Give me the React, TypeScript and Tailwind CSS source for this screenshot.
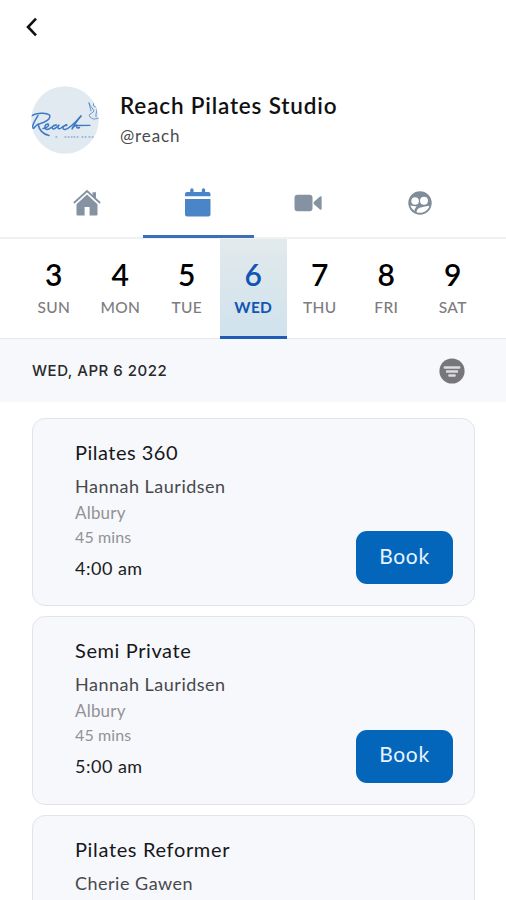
import React from "react";

const days = [
  { n: "3", d: "SUN" },
  { n: "4", d: "MON" },
  { n: "5", d: "TUE" },
  { n: "6", d: "WED", active: true },
  { n: "7", d: "THU" },
  { n: "8", d: "FRI" },
  { n: "9", d: "SAT" },
];

const classes = [
  { title: "Pilates 360", titleTracking: "tracking-[0.5px]", coach: "Hannah Lauridsen", place: "Albury", length: "45 mins", time: "4:00 am" },
  { title: "Semi Private", titleTracking: "tracking-[0.6px]", coach: "Hannah Lauridsen", place: "Albury", length: "45 mins", time: "5:00 am" },
  { title: "Pilates Reformer", titleTracking: "tracking-[0.65px]", coach: "Cherie Gawen" },
];

function Logo() {
  return (
    <svg width="68" height="68" viewBox="0 0 68 68" fill="none" className="block shrink-0">
      <defs>
        <clipPath id="disc">
          <circle cx="34" cy="34" r="33.7" />
        </clipPath>
      </defs>
      <circle cx="34" cy="34" r="33.7" fill="#e1e9f1" />
      <g clipPath="url(#disc)" stroke="#3c78c3" strokeLinecap="round" strokeLinejoin="round">
        <path d="M0 30 C5 27 15 26 18.5 29 C20.5 33 14 36.5 8 38" strokeWidth="1.5" />
        <path d="M7 29.5 C5 33 2 37 1.5 41 C2 45 4 40 7 38 C8 43 11 48 18 49.5" strokeWidth="1.5" />
        <path d="M12 42.5 C16 42 19 39 17 38 C14 38 12 43 16 43.5 C19 43.5 22 39 25.5 39 C21.5 38.5 19.5 43 22.5 43 C25 42.5 27 40 28 39 C26 42 27 44 30 42 C34 38.5 37 38 35.5 39.5 C32 39 30.5 43.5 34 43.5 C38 43 43 38 50 30" strokeWidth="1.4" />
        <path d="M50 30 C46 35 42 40 41 43 C43 40 45.5 38.5 46 39.5 C45.5 41 45.5 43 48.5 41.5" strokeWidth="1.4" />
        <path d="M44 39.5 L59 39.3" strokeWidth="1.3" />
        <path d="M58 17 C59 21 62 22 63 25 C60 29 57 27 59 31 C62 34 65 33 68 32 M63 17 C61 20 64 22 66 20 C67 24 64 28 65 31 M58 17 L60 25" strokeWidth="0.9" opacity="0.8" />
        <path d="M25 51 H28 M34 51 H41 M43 51 H48 M51 51 H55 M58 51 H63" strokeWidth="1.3" strokeDasharray="0.8 2.4" opacity="0.55" />
      </g>
    </svg>
  );
}

function HomeIcon() {
  return (
    <svg width="28" height="28" viewBox="0 0 28 28" className="block">
      <path d="M19.5 3.2 H23 V10.5 L19.5 7.4 Z" fill="#8492a1" />
      <path d="M0.9 14 L14 2 L27.1 14" fill="none" stroke="#8492a1" strokeWidth="1.8" />
      <path d="M3.5 15.2 L14 5.6 L24.5 15.2 V25.4 Q24.5 26.4 23.5 26.4 H16.6 V18 H11.6 V26.4 H4.5 Q3.5 26.4 3.5 25.4 Z" fill="#8492a1" />
    </svg>
  );
}

function CalendarIcon() {
  return (
    <svg width="28" height="30" viewBox="0 0 28 30" fill="#4a86c7" className="block">
      <path d="M1 8.2 V6 Q1 4 3 4 H6.2 V2 A1.7 1.7 0 0 1 9.6 2 V4 H17.8 V2 A1.7 1.7 0 0 1 21.2 2 V4 H24.5 Q26.5 4 26.5 6 V8.2 Z" />
      <path d="M1 11 H26.5 V26.6 Q26.5 28.4 24.7 28.4 H2.8 Q1 28.4 1 26.6 Z" />
    </svg>
  );
}

function VideoIcon() {
  return (
    <svg width="28" height="18" viewBox="0 0 28 18" fill="#8492a1" className="block">
      <rect x="0.5" y="0.8" width="18" height="16.4" rx="3" />
      <path d="M19.7 8 L26 2.5 Q27.6 1.6 27.6 3.3 V14.7 Q27.6 16.4 26 15.5 L19.7 10 Z" />
    </svg>
  );
}

function GroupIcon() {
  return (
    <svg width="24" height="24" viewBox="0 0 24 24" className="block">
      <circle cx="12" cy="12" r="11.7" fill="#7f8c99" />
      <g fill="#fff">
        <circle cx="7.1" cy="10" r="3.8" />
        <circle cx="16" cy="9.8" r="4" />
        <path d="M2.2 14.6 Q5.6 15.1 8.6 15.4 Q6.5 17.4 6.5 19.9 Q3.2 17.8 2.2 14.6 Z" />
        <path d="M8.6 21.2 Q8.5 17.4 12.6 16.4 Q17 15.4 21.5 14.7 Q20 19.9 14.5 21.5 Q11.5 22.1 8.6 21.2 Z" />
      </g>
    </svg>
  );
}

function FilterIcon() {
  return (
    <svg width="26" height="26" viewBox="0 0 26 26" className="block">
      <circle cx="13" cy="13" r="12.6" fill="#77777b" />
      <path d="M5.8 9.4 H20.2 M8 13.6 H18 M10.4 17.6 H15.6" stroke="#dcdce0" strokeWidth="2.5" strokeLinecap="round" />
    </svg>
  );
}

export default function App() {
  return (
    <div className="flex h-[900px] w-[506px] flex-col overflow-hidden bg-white font-[Lato,sans-serif] whitespace-nowrap">
      <header className="flex h-[179px] shrink-0 flex-col px-8">
        <div className="-ml-2 flex h-[54px] items-center">
          <svg width="16" height="22" viewBox="0 0 16 22" fill="none" className="block">
            <path d="M12 2.6 L4 11 L12 19.4" stroke="#111" strokeWidth="2.6" />
          </svg>
        </div>
        <div className="mt-[32px] -ml-px flex items-center">
          <Logo />
          <div className="ml-[21px] flex flex-col">
            <h1 className="text-[22.5px] leading-[30px] font-semibold tracking-[0.82px] text-[#111]">Reach Pilates Studio</h1>
            <p className="mt-[3px] mb-px text-[17px] leading-6 tracking-[0.9px] text-[#4b4b4d]">@reach</p>
          </div>
        </div>
      </header>

      <nav className="grid h-[60px] shrink-0 grid-cols-4 border-b-2 border-[#eff0f1] pr-[31px] pl-8">
        <div className="flex justify-center pt-[10px]"><HomeIcon /></div>
        <div className="-mb-[1px] flex justify-center border-b-3 border-[#3b70b8] pt-[9px]"><CalendarIcon /></div>
        <div className="flex justify-center pt-[15px] pr-[2px]"><VideoIcon /></div>
        <div className="flex justify-center pt-[12px]"><GroupIcon /></div>
      </nav>

      <section className="flex h-[100px] shrink-0 border-b border-[#e6e8eb] pr-5 pl-[20.5px]">
        {days.map((day) => (
          <div
            key={day.d}
            className={
              "flex flex-1 flex-col items-center pt-[17px] " +
              (day.active
                ? "-mb-px border-b-3 border-[#1f5cb5] bg-linear-to-b from-[#e2eaec] to-[#d0e2ed] text-[#0f56b3]"
                : "text-black")
            }
          >
            <span className="text-[30px] leading-9 font-semibold">{day.n}</span>
            <span
              className={
                "mt-[5px] text-[15.5px] leading-5 tracking-[0.3px] " +
                (day.active ? "font-bold" : "font-medium text-[#7c7c7f]")
              }
            >
              {day.d}
            </span>
          </div>
        ))}
      </section>

      <div className="flex h-[63px] shrink-0 items-center justify-between bg-[#f6f8fc] pr-[41px] pl-8">
        <span className="pt-[2px] font-[Inter,sans-serif] text-[15px] font-medium tracking-[0.52px] text-[#29292b]">WED, APR 6 2022</span>
        <FilterIcon />
      </div>

      <main className="flex flex-col gap-[10px] pt-[15.5px] pr-[31px] pl-8">
        {classes.map((c) => (
          <article
            key={c.title}
            className="flex h-[188.5px] shrink-0 items-end justify-between rounded-[13px] border-[1.5px] border-[#e3e4ea] bg-[#f6f8fc] pr-[21px] pl-[42px]"
          >
            <div className="flex h-full flex-col pt-[19px]">
              <h2 className={"text-[20px] leading-7 text-[#171719] " + c.titleTracking}>{c.title}</h2>
              <p className="mt-[8px] text-[18px] leading-6 tracking-[0.5px] text-[#48484b]">{c.coach}</p>
              {c.time && (
                <>
                  <p className="mt-[3px] text-[17px] leading-6 tracking-[0.2px] text-[#929296]">{c.place}</p>
                  <p className="text-[16px] leading-6 tracking-[0.1px] text-[#929296]">{c.length}</p>
                  <p className="mt-[7px] text-[18px] leading-6 tracking-[0.5px] text-[#1c1c1e]">{c.time}</p>
                </>
              )}
            </div>
            {c.time && (
              <button className="mb-[21px] flex h-[53px] w-[97px] items-center justify-center rounded-[11px] bg-[#0366bb] pb-[4px] text-[21px] tracking-[0.6px] text-[#e9f3ff]">
                Book
              </button>
            )}
          </article>
        ))}
      </main>
    </div>
  );
}
